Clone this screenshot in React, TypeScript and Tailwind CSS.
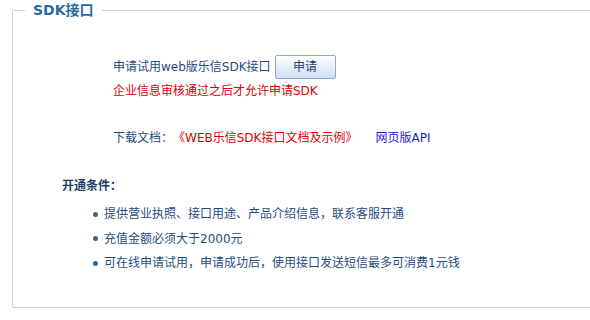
import React from "react";

const font = { fontFamily: '"DejaVu Sans", "Noto Sans CJK SC", sans-serif' };

export default function App() {
  const items = [
    "提供营业执照、接口用途、产品介绍信息，联系客服开通",
    "充值金额必须大于2000元",
    "可在线申请试用，申请成功后，使用接口发送短信最多可消费1元钱",
  ];
  return (
    <div className="w-[590px] h-[320px] bg-white overflow-hidden" style={font}>
      <fieldset className="ml-[12px] w-[582px] h-[308px] border border-[#cfcfcf] rounded-[2px] pl-[12px]">
        <legend className="px-[8px] text-[14px] leading-[20px] font-bold text-[#2c69a3]">SDK接口</legend>
        <div className="-ml-[12px] text-[12px] text-[#1f4d7c]">
          <div className="pl-[100px] pt-[35px]">
            <div className="flex items-center h-[24px]">
              <span className="leading-[18px]">申请试用web版乐信SDK接口</span>
              <button className="ml-[4px] w-[61px] h-[24px] rounded-[2px] border border-[#8ea9cf] bg-gradient-to-b from-[#ffffff] to-[#cddcf1] text-[12px] text-[#1f3f6e] leading-[22px]">
                申请
              </button>
            </div>
            <div className="mt-[3px] leading-[18px] text-[#e00000]">企业信息审核通过之后才允许申请SDK</div>
            <div className="mt-[29px] leading-[18px] flex">
              <span>下载文档：</span>
              <span className="text-[#e00000]">《WEB乐信SDK接口文档及示例》</span>
              <span className="ml-[18px] text-[#1a1ac8]">网页版API</span>
            </div>
          </div>
          <div className="pl-[49px] mt-[30px] leading-[18px] font-bold text-[#1c3e66]">开通条件：</div>
          <ul className="pl-[80px] mt-[7px]">
            {items.map((t) => (
              <li key={t} className="flex items-center h-[24.5px]">
                <span className="w-[5px] h-[5px] rounded-full bg-[#3a6592] mr-[6px]" />
                <span className="leading-[18px]">{t}</span>
              </li>
            ))}
          </ul>
        </div>
      </fieldset>
    </div>
  );
}
